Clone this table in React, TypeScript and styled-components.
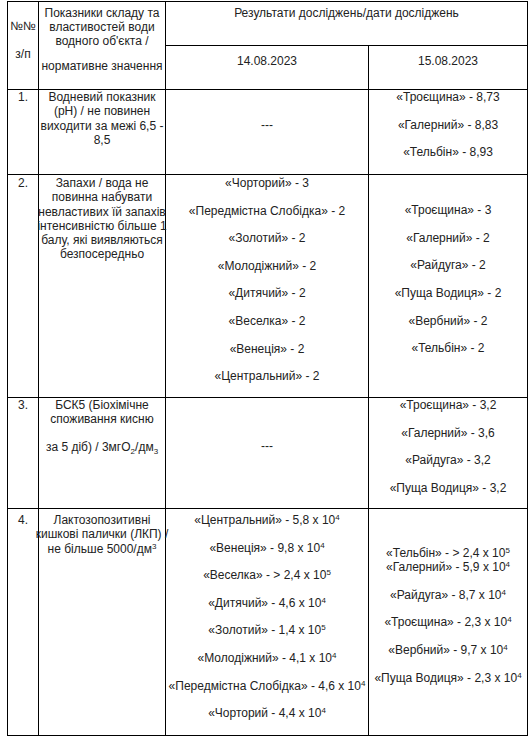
import React from 'react';
import styled, {createGlobalStyle} from 'styled-components';

const GlobalStyle = createGlobalStyle`
  html, body {
    margin: 0;
    padding: 0;
    background: #fff;
  }

  * {
    box-sizing: border-box;
  }
`

const Page = styled.div`
  padding: 1px 0 0 7px;
  font-family: "Liberation Sans", Arial, sans-serif;
  font-size: 12px;
  color: #222;
`

const Table = styled.div`
  display: grid;
  grid-template-columns: 31px 127px 203px 159px;
  grid-template-rows: 44px 44px 85px 223px 111px 227px;
  width: 521px;
  border-top: 1px solid #000;
  border-left: 1px solid #000;
`

interface CellProps {
    $col: string;
    $row: string;
    $middle?: boolean;
    $top?: number;
}

const Cell = styled.div<CellProps>`
  grid-column: ${p => p.$col};
  grid-row: ${p => p.$row};
  border-right: 1px solid #000;
  border-bottom: 1px solid #000;
  display: flex;
  flex-direction: column;
  align-items: center;
  justify-content: ${p => (p.$middle ? 'center' : 'flex-start')};
  padding-top: ${p => p.$top ?? 0}px;
  min-width: 0;
`

const Para = styled.div<{ $gap?: number }>`
  display: flex;
  flex-direction: column;
  align-items: center;
  margin-bottom: ${p => p.$gap ?? 13.3}px;
`

const Line = styled.span`
  display: block;
  line-height: 14.3px;
  white-space: nowrap;
`

const Sup = styled.sup`
  font-size: 8px;
  line-height: 0;
  vertical-align: 4px;
`

const Sub = styled.sub`
  font-size: 8px;
  line-height: 0;
  vertical-align: -3px;
`

type Paras = React.ReactNode[][];

const Blocks = ({items, gap}: { items: Paras; gap?: number }) => (
    <>
        {items.map((lines, i) => (
            <Para key={i} $gap={gap}>
                {lines.map((l, j) => <Line key={j}>{l}</Line>)}
            </Para>
        ))}
    </>
)

// one paragraph per line
const each = (list: React.ReactNode[]): Paras => list.map(l => [l]);

interface BodyRow {
    n: string;
    indicator: Paras;
    first: Paras | null;
    second: Paras;
    top: number;
    secondMiddle: boolean;
}

const rows: BodyRow[] = [
    {
        n: '1.',
        indicator: [['Водневий показник', '(pH) / не повинен', 'виходити за межі 6,5 -', '8,5']],
        first: null,
        second: each(['«Троєщина» - 8,73', '«Галерний» - 8,83', '«Тельбін» - 8,93']),
        top: 0,
        secondMiddle: false,
    },
    {
        n: '2.',
        indicator: [[
            'Запахи / вода не',
            'повинна набувати',
            'невластивих їй запахів',
            'інтенсивністю більше 1',
            'балу, які виявляються',
            'безпосередньо',
        ]],
        first: each([
            '«Чорторий» - 3',
            '«Передмістна Слобідка» - 2',
            '«Золотий» - 2',
            '«Молодіжний» - 2',
            '«Дитячий» - 2',
            '«Веселка» - 2',
            '«Венеція» - 2',
            '«Центральний» - 2',
        ]),
        second: each([
            '«Троєщина» - 3',
            '«Галерний» - 2',
            '«Райдуга» - 2',
            '«Пуща Водиця» - 2',
            '«Вербний» - 2',
            '«Тельбін» - 2',
        ]),
        top: 1,
        secondMiddle: true,
    },
    {
        n: '3.',
        indicator: [
            ['БСК5 (Біохімічне', 'споживання кисню'],
            [<>за 5 діб) / 3мгО<Sub>2</Sub>/дм<Sub>3</Sub></>],
        ],
        first: null,
        second: each(['«Троєщина» - 3,2', '«Галерний» - 3,6', '«Райдуга» - 3,2', '«Пуща Водиця» - 3,2']),
        top: 0,
        secondMiddle: false,
    },
    {
        n: '4.',
        indicator: [['Лактозопозитивні', 'кишкові палички (ЛКП) /', <>не більше 5000/дм<Sup>3</Sup></>]],
        first: each([
            <>«Центральний» - 5,8 х 10<Sup>4</Sup></>,
            <>«Венеція» - 9,8 х 10<Sup>4</Sup></>,
            <>«Веселка» - &gt; 2,4 х 10<Sup>5</Sup></>,
            <>«Дитячий» - 4,6 х 10<Sup>4</Sup></>,
            <>«Золотий» - 1,4 х 10<Sup>5</Sup></>,
            <>«Молодіжний» - 4,1 х 10<Sup>4</Sup></>,
            <>«Передмістна Слобідка» - 4,6 х 10<Sup>4</Sup></>,
            <>«Чорторий - 4,4 х 10<Sup>4</Sup></>,
        ]),
        second: [
            [<>«Тельбін» - &gt; 2,4 х 10<Sup>5</Sup></>, <>«Галерний» - 5,9 х 10<Sup>4</Sup></>],
            [<>«Райдуга» - 8,7 х 10<Sup>4</Sup></>],
            [<>«Троєщина» - 2,3 х 10<Sup>4</Sup></>],
            [<>«Вербний» - 9,7 х 10<Sup>4</Sup></>],
            [<>«Пуща Водиця» - 2,3 х 10<Sup>4</Sup></>],
        ],
        top: 4,
        secondMiddle: true,
    },
];

const App = () => {
    return (
        <Page>
            <GlobalStyle/>
            <Table>
                <Cell $col="1" $row="1 / 3" $top={16.5}>
                    <Blocks items={[['№№'], ['з/п']]} gap={14.5}/>
                </Cell>
                <Cell $col="2" $row="1 / 3" $top={3.5}>
                    <Blocks items={[['Показники складу та', 'властивостей води', "водного об'єкта /"]]} gap={11}/>
                    <Blocks items={[['нормативне значення']]}/>
                </Cell>
                <Cell $col="3 / 5" $row="1" $top={4}>
                    <Blocks items={[['Результати досліджень/дати досліджень']]}/>
                </Cell>
                <Cell $col="3" $row="2" $top={7.5}>
                    <Blocks items={[['14.08.2023']]}/>
                </Cell>
                <Cell $col="4" $row="2" $top={7.5}>
                    <Blocks items={[['15.08.2023']]}/>
                </Cell>

                {rows.map((r, i) => {
                    const row = String(i + 3);
                    return (
                        <React.Fragment key={r.n}>
                            <Cell $col="1" $row={row} $top={r.top}>
                                <Blocks items={[[r.n]]}/>
                            </Cell>
                            <Cell $col="2" $row={row} $top={r.top}>
                                <Blocks items={r.indicator}/>
                            </Cell>
                            {r.first ? (
                                <Cell $col="3" $row={row} $top={r.top}>
                                    <Blocks items={r.first}/>
                                </Cell>
                            ) : (
                                <Cell $col="3" $row={row} $middle>
                                    <Blocks items={[['---']]}/>
                                </Cell>
                            )}
                            <Cell $col="4" $row={row} $top={r.secondMiddle ? 0 : r.top} $middle={r.secondMiddle}>
                                <Blocks items={r.second}/>
                            </Cell>
                        </React.Fragment>
                    )
                })}
            </Table>
        </Page>
    )
}

export default App
